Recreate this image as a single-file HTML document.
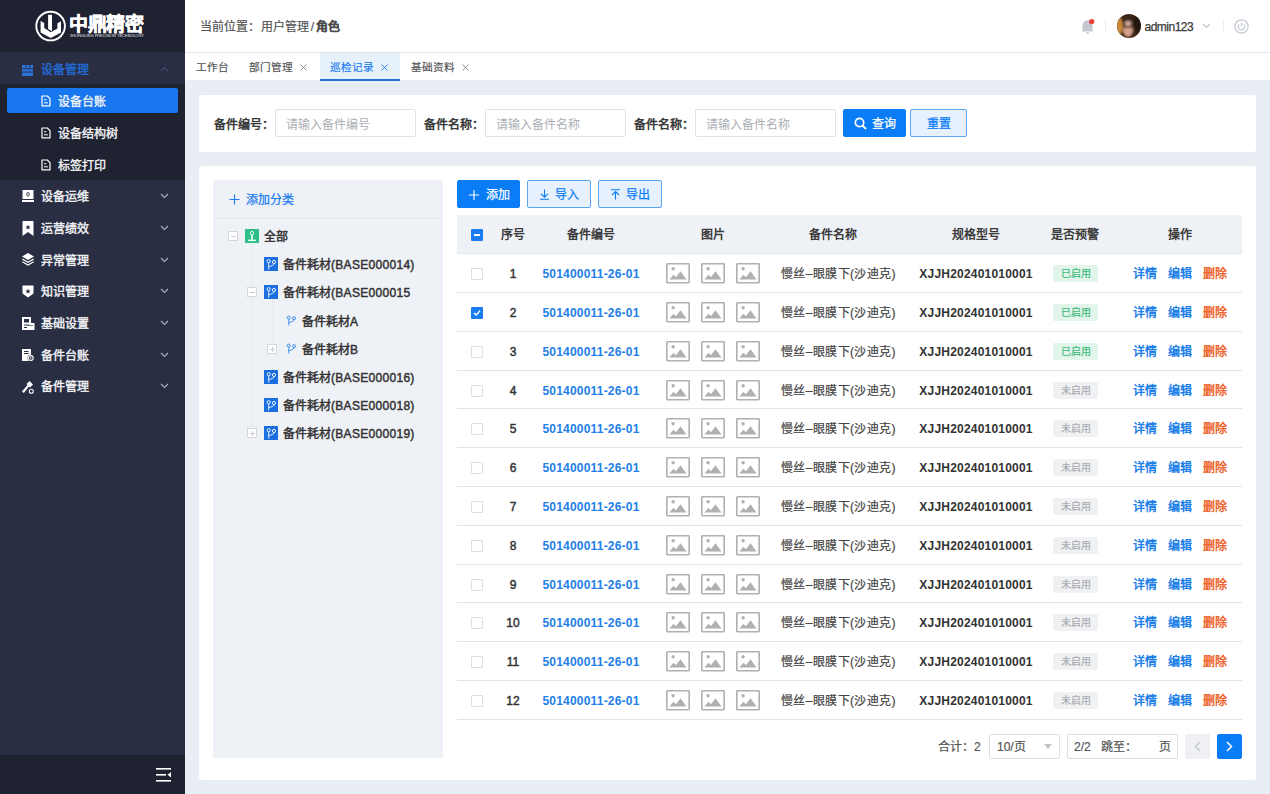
<!DOCTYPE html>
<html lang="zh-CN"><head><meta charset="utf-8">
<style>
*{margin:0;padding:0;box-sizing:border-box}
html,body{width:1270px;height:794px;overflow:hidden;background:#e9edf4;font-family:"Liberation Sans",sans-serif;font-size:12px;color:#333}
.abs{position:absolute}
#side{position:absolute;left:0;top:0;width:185px;height:794px;background:#2a2e42}
#logo{position:absolute;left:0;top:0;width:185px;height:52px;background:#1f2231}
#sub{position:absolute;left:0;top:84px;width:185px;height:96px;background:#1f2231}
#sbot{position:absolute;left:0;top:755px;width:185px;height:39px;background:#1f2231}
.mi{position:absolute;left:0;width:185px;height:20px;margin-top:1px;line-height:20px;color:#f2f3f6;font-size:12px;-webkit-text-stroke:0.4px currentColor}
.mi .t{position:absolute;left:41px;top:0}
.mi .ic{position:absolute;left:22px;top:4px;width:11px;height:11px}
.mi .ch{position:absolute;left:160px;top:6px}
#hdr{position:absolute;left:185px;top:0;width:1085px;height:53px;background:#fff;border-bottom:1px solid #e2e4e8}
#tabs{position:absolute;left:185px;top:53px;width:1085px;height:27px;background:#fff;z-index:2}
.card{position:absolute;background:#fff;border-radius:3px}
.lbl{position:absolute;color:#333;font-size:12px;line-height:16px;margin-top:1.5px;-webkit-text-stroke:0.5px #333}
.inp{position:absolute;height:28px;border:1px solid #e0e2e7;border-radius:2px;background:#fff;color:#acaeb4;font-size:12px;line-height:26px;padding-left:10px;padding-top:2px}
.btn{position:absolute;height:28px;border-radius:2px;font-size:12px;line-height:26px;text-align:center;padding-top:1px;-webkit-text-stroke:0.25px currentColor}
.si{position:absolute;left:0;width:185px;height:20px;line-height:20px;color:#f4f5f8;font-size:12px;-webkit-text-stroke:0.35px #f4f5f8}
.si svg{position:absolute;left:41px;top:4px}
.si span{position:absolute;left:58px;top:0}
.tab{position:absolute;z-index:3;top:6px;font-size:10.6px;line-height:16px;color:#555;white-space:nowrap;-webkit-text-stroke:0.2px currentColor}
.tab .x{display:inline-block;margin-left:7px;width:7px;height:7px;position:relative;top:0px}
.tab .x svg{position:absolute;left:0;top:0}
.cell{position:absolute;width:200px;text-align:center;white-space:nowrap;font-size:12px;padding-top:1px}
.tag{position:absolute;width:45px;height:17px;line-height:17px;font-size:10px;border-radius:2px;text-align:center;-webkit-text-stroke:0.15px currentColor}
.tn{position:absolute;line-height:18px;font-size:12px;color:#333;white-space:nowrap;margin-top:1px;-webkit-text-stroke:0.45px #333}
</style></head><body>
<div id="side">
<div id="logo">
<svg class="abs" style="left:32px;top:8px" width="38" height="36" viewBox="0 0 38 36">
<circle cx="18.6" cy="18.1" r="14.3" fill="none" stroke="#fff" stroke-width="1.9"/>
<path d="M8.6 13 L12.2 15 L12.2 20 L18.8 24.2 L25.4 20.6 L25.4 15.2 L29 13.2 L29 24.5 L18.8 30 L8.6 24.5 Z" fill="#fff"/>
<path d="M16.1 6.8 L20 6.8 L20 23.2 L16.1 21 Z" fill="#fff"/>
</svg>
<div class="abs" style="left:69px;top:13.5px;font-size:19px;line-height:22px;font-weight:bold;color:#fff;-webkit-text-stroke:0.5px #fff;letter-spacing:-0.3px">中鼎精密</div>
<div class="abs" style="left:70px;top:33.5px;font-size:5px;line-height:5px;color:#e8e8ee;white-space:nowrap;transform:scale(0.775,0.85);transform-origin:0 0">ZHONGDING PRECISION TECHNOLOGY</div>
</div>
<div class="mi" style="top:59px;color:#2268cf;-webkit-text-stroke:0.5px #2268cf">
<svg class="abs" style="left:22px;top:5px" width="11" height="11" viewBox="0 0 11 11"><rect x="0" y="0" width="11" height="11" fill="#2a72dc"/><rect x="0" y="3.3" width="11" height="0.9" fill="#2a2e42"/><rect x="0" y="6.6" width="11" height="0.9" fill="#2a2e42"/><rect x="3.5" y="0" width="0.9" height="3.3" fill="#2a2e42"/><rect x="7" y="0" width="0.9" height="3.3" fill="#2a2e42"/></svg>
<span class="t">设备管理</span>
<svg class="ch" width="9" height="6" viewBox="0 0 9 6"><path d="M1 5 L4.5 1.5 L8 5" fill="none" stroke="#3e4f72" stroke-width="1.1"/></svg>
</div>
<div id="sub">
<div class="abs" style="left:7px;top:4px;width:171px;height:25px;background:#1877ee;border-radius:2px"></div>
<div class="si" style="top:7.5px"><svg width="10" height="12" viewBox="0 0 10 12" style="top:3px"><path d="M1 1 H6.3 L9 3.7 V10.8 H1 Z" fill="none" stroke="#fff" stroke-width="1.2" stroke-linejoin="round"/><path d="M3 4.8 H5.3 M3 7.8 H7" stroke="#fff" stroke-width="1"/></svg><span>设备台账</span></div>
<div class="si" style="top:39.5px"><svg width="10" height="12" viewBox="0 0 10 12" style="top:3px"><path d="M1 1 H6.3 L9 3.7 V10.8 H1 Z" fill="none" stroke="#fff" stroke-width="1.2" stroke-linejoin="round"/><path d="M3 4.8 H5.3 M3 7.8 H7" stroke="#fff" stroke-width="1"/></svg><span>设备结构树</span></div>
<div class="si" style="top:71.5px"><svg width="10" height="12" viewBox="0 0 10 12" style="top:3px"><path d="M1 1 H6.3 L9 3.7 V10.8 H1 Z" fill="none" stroke="#fff" stroke-width="1.2" stroke-linejoin="round"/><path d="M3 4.8 H5.3 M3 7.8 H7" stroke="#fff" stroke-width="1"/></svg><span>标签打印</span></div>
</div>
<div class="mi" style="top:186px"><svg class="abs" style="left:22px;top:3px" width="13" height="12" viewBox="0 0 13 12"><rect x="0.5" y="0" width="11" height="9" fill="#fff"/><rect x="0" y="10" width="12" height="2" fill="#fff"/><ellipse cx="6" cy="4.3" rx="1.3" ry="1.8" fill="none" stroke="#2a2e42" stroke-width="0.9"/></svg><span class="t">设备运维</span><svg class="ch" width="9" height="6" viewBox="0 0 9 6"><path d="M1 1 L4.5 4.5 L8 1" fill="none" stroke="#aab0bd" stroke-width="1.1"/></svg></div>
<div class="mi" style="top:218px"><svg class="abs" style="left:22px;top:2px" width="13" height="15" viewBox="0 0 13 15"><path d="M0.5 0 H11.5 V15 L6 11 L0.5 15 Z" fill="#fff"/><path d="M6 3.8 L6.8 5.5 L8.5 5.6 L7.2 6.8 L7.6 8.5 L6 7.6 L4.4 8.5 L4.8 6.8 L3.5 5.6 L5.2 5.5 Z" fill="#2a2e42"/></svg><span class="t">运营绩效</span><svg class="ch" width="9" height="6" viewBox="0 0 9 6"><path d="M1 1 L4.5 4.5 L8 1" fill="none" stroke="#aab0bd" stroke-width="1.1"/></svg></div>
<div class="mi" style="top:250px"><svg class="abs" style="left:22px;top:2px" width="13" height="13" viewBox="0 0 13 13"><path d="M6 0 L12 3.5 L6 7 L0 3.5 Z" fill="#fff"/><path d="M0.3 6 L6 9.3 L11.7 6" fill="none" stroke="#fff" stroke-width="1.3"/><path d="M0.3 8.7 L6 12 L11.7 8.7" fill="none" stroke="#fff" stroke-width="1.3"/></svg><span class="t">异常管理</span><svg class="ch" width="9" height="6" viewBox="0 0 9 6"><path d="M1 1 L4.5 4.5 L8 1" fill="none" stroke="#aab0bd" stroke-width="1.1"/></svg></div>
<div class="mi" style="top:281px"><svg class="abs" style="left:22px;top:3px" width="13" height="13" viewBox="0 0 13 13"><path d="M0.5 0.5 H11.5 V8.5 L6 12.5 L0.5 8.5 Z" fill="#fff"/><path d="M6 3.8 L6.8 5.5 L8.5 5.6 L7.2 6.8 L7.6 8.5 L6 7.6 L4.4 8.5 L4.8 6.8 L3.5 5.6 L5.2 5.5 Z" fill="#2a2e42"/></svg><span class="t">知识管理</span><svg class="ch" width="9" height="6" viewBox="0 0 9 6"><path d="M1 1 L4.5 4.5 L8 1" fill="none" stroke="#aab0bd" stroke-width="1.1"/></svg></div>
<div class="mi" style="top:313px"><svg class="abs" style="left:22px;top:2.5px" width="13" height="13" viewBox="0 0 13 13"><rect x="0" y="0" width="9" height="13" fill="#fff"/><rect x="9" y="6" width="3.5" height="7" fill="#fff"/><rect x="2" y="2" width="5" height="3.5" fill="#2a2e42"/><rect x="2" y="7.5" width="5" height="1" fill="#2a2e42"/><rect x="2" y="10" width="3" height="1" fill="#2a2e42"/><rect x="6" y="8" width="5" height="1" fill="#2a2e42" opacity=".6"/></svg><span class="t">基础设置</span><svg class="ch" width="9" height="6" viewBox="0 0 9 6"><path d="M1 1 L4.5 4.5 L8 1" fill="none" stroke="#aab0bd" stroke-width="1.1"/></svg></div>
<div class="mi" style="top:345px"><svg class="abs" style="left:22px;top:2.5px" width="13" height="12" viewBox="0 0 13 12"><rect x="0" y="0" width="9" height="12" fill="#fff"/><rect x="2" y="2" width="4.5" height="1" fill="#2a2e42"/><rect x="2" y="4" width="4.5" height="1" fill="#2a2e42"/><circle cx="8.8" cy="9" r="3.3" fill="#2a2e42"/><circle cx="8.8" cy="9" r="2.4" fill="none" stroke="#fff" stroke-width="1.1"/><circle cx="8.8" cy="9" r="0.8" fill="#fff"/></svg><span class="t">备件台账</span><svg class="ch" width="9" height="6" viewBox="0 0 9 6"><path d="M1 1 L4.5 4.5 L8 1" fill="none" stroke="#aab0bd" stroke-width="1.1"/></svg></div>
<div class="mi" style="top:376px"><svg class="abs" style="left:22px;top:3.5px" width="13" height="13" viewBox="0 0 13 13"><path d="M0 10.5 L5.5 4 L4.5 3 L7.5 0 L11 3.5 L8 6.5 L7 5.5 L1.8 12 Z" fill="#fff"/><circle cx="9.3" cy="10.3" r="2.7" fill="#2a2e42"/><circle cx="9.3" cy="10.3" r="2" fill="none" stroke="#fff" stroke-width="1.1"/></svg><span class="t">备件管理</span><svg class="ch" width="9" height="6" viewBox="0 0 9 6"><path d="M1 1 L4.5 4.5 L8 1" fill="none" stroke="#aab0bd" stroke-width="1.1"/></svg></div>
<div id="sbot">
<svg class="abs" style="left:156px;top:13px" width="16" height="14" viewBox="0 0 16 14"><rect x="0" y="0" width="15" height="1.6" fill="#fff"/><rect x="0" y="6" width="10" height="1.6" fill="#fff"/><rect x="0" y="12" width="15" height="1.6" fill="#fff"/><path d="M15 4 L11.5 6.8 L15 9.6 Z" fill="#fff"/></svg>
</div>
</div>
<div id="hdr">
<div class="abs" style="left:15px;top:19px;font-size:12px;line-height:17px;color:#555;white-space:nowrap;-webkit-text-stroke:0.2px #555">当前位置：<span style="margin-left:1px">用户管理</span><span style="margin:0 1.8px">/</span><b style="color:#222">角色</b></div>
<svg class="abs" style="left:895px;top:18px" width="16" height="16" viewBox="0 0 16 16"><path d="M2.5 12.5 L2.5 8 C2.5 4.5 4.8 2.3 7.5 2.3 C10.2 2.3 12.5 4.5 12.5 8 L12.5 12.5 L13.5 13.5 L1.5 13.5 Z" fill="#c2c7d0"/><rect x="6" y="14.3" width="3" height="1.5" rx=".7" fill="#c2c7d0"/><circle cx="11.7" cy="3.6" r="2.7" fill="#e8453c"/></svg>
<div class="abs" style="left:920px;top:19px;width:1px;height:13px;background:#eceef2"></div>
<svg class="abs" style="left:932px;top:14px" width="24" height="24" viewBox="0 0 24 24"><defs><clipPath id="av"><circle cx="12" cy="12" r="12"/></clipPath><filter id="bl"><feGaussianBlur stdDeviation="0.8"/></filter></defs><g clip-path="url(#av)"><rect width="24" height="24" fill="#3b2519"/><g filter="url(#bl)"><ellipse cx="2" cy="12" rx="4" ry="9" fill="#c8883a"/><ellipse cx="11" cy="16.5" rx="5" ry="6.5" fill="#d6a08a"/><ellipse cx="11" cy="9" rx="3.5" ry="2.5" fill="#c9a59a"/><rect x="7" y="12" width="8" height="2" fill="#4a3028"/><ellipse cx="20" cy="10" rx="4" ry="8" fill="#24150f"/></g></g></svg>
<div class="abs" style="left:959.5px;top:19px;font-size:12px;line-height:17px;color:#3a3a3a;letter-spacing:-0.5px;-webkit-text-stroke:0.25px #3a3a3a">admin123</div>
<svg class="abs" style="left:1017px;top:23px" width="9" height="6" viewBox="0 0 9 6"><path d="M1 1 L4.5 4.5 L8 1" fill="none" stroke="#c0c4cc" stroke-width="1.1"/></svg>
<div class="abs" style="left:1038px;top:19px;width:1px;height:13px;background:#eceef2"></div>
<svg class="abs" style="left:1049px;top:19px" width="15" height="15" viewBox="0 0 15 15"><circle cx="7.5" cy="7.5" r="6.6" fill="none" stroke="#c5cad3" stroke-width="1.3"/><path d="M5.2 5.3 A3.3 3.3 0 1 0 9.8 5.3" fill="none" stroke="#c5cad3" stroke-width="1.2"/><path d="M7.5 3.5 V7.5" stroke="#c5cad3" stroke-width="1.2"/></svg>
</div>
<div id="tabs">
<div class="tab" style="left:11px">工作台</div>
<div class="tab" style="left:64px">部门管理<span class="x"><svg width="7" height="7" viewBox="0 0 7 7"><path d="M0.5 0.5 L6.5 6.5 M6.5 0.5 L0.5 6.5" stroke="#888" stroke-width="0.9"/></svg></span></div>
<div class="abs" style="left:135px;top:0;width:80px;height:28px;background:#e6f1fc;border-bottom:2px solid #2474d8;z-index:2"></div>
<div class="tab" style="left:145px;color:#1a7cf0">巡检记录<span class="x"><svg width="7" height="7" viewBox="0 0 7 7"><path d="M0.5 0.5 L6.5 6.5 M6.5 0.5 L0.5 6.5" stroke="#1a7cf0" stroke-width="0.9"/></svg></span></div>
<div class="tab" style="left:226px">基础资料<span class="x"><svg width="7" height="7" viewBox="0 0 7 7"><path d="M0.5 0.5 L6.5 6.5 M6.5 0.5 L0.5 6.5" stroke="#888" stroke-width="0.9"/></svg></span></div>
</div>
<div class="card" style="left:199px;top:95px;width:1057px;height:57px">
<div class="lbl" style="left:15px;top:20px">备件编号：</div>
<div class="inp" style="left:76px;top:14px;width:141px">请输入备件编号</div>
<div class="lbl" style="left:225px;top:20px">备件名称：</div>
<div class="inp" style="left:286px;top:14px;width:141px">请输入备件名称</div>
<div class="lbl" style="left:435px;top:20px">备件名称：</div>
<div class="inp" style="left:496px;top:14px;width:141px">请输入备件名称</div>
<div class="btn" style="left:644px;top:14px;width:63px;background:#0a7cf5;color:#fff;border:1px solid #0a7cf5"><svg style="vertical-align:-2px;margin-right:5px" width="13" height="13" viewBox="0 0 13 13"><circle cx="5.5" cy="5.5" r="4.2" fill="none" stroke="#fff" stroke-width="1.7"/><path d="M8.5 8.5 L12 12" stroke="#fff" stroke-width="1.9"/></svg>查询</div>
<div class="btn" style="left:711px;top:14px;width:57px;background:#e6f1fd;color:#0a7cf5;border:1px solid #5aa6f5">重置</div>
</div>
<div class="card" style="left:199px;top:166px;width:1057px;height:614px"></div>
<div class="abs" style="left:213px;top:180px;width:230px;height:578px;background:#eef1f6;border-radius:2px">
<div class="abs" style="left:0;top:38px;width:230px;height:1px;background:#e3e6ec"></div>
<div class="abs" style="left:16px;top:12px;font-size:12px;line-height:17px;color:#1a7cf0;white-space:nowrap;-webkit-text-stroke:0.25px #1a7cf0"><svg style="vertical-align:-1px;margin-right:6px" width="11" height="11" viewBox="0 0 11 11"><path d="M5.5 0.5 V10.5 M0.5 5.5 H10.5" stroke="#1a7cf0" stroke-width="1.1"/></svg>添加分类</div>
<div class="abs" style="left:39px;top:63px;width:1px;height:191px;background:#e8eaef"></div>
<div class="abs" style="left:59px;top:119px;width:1px;height:50px;background:#e8eaef"></div>
<div class="abs" style="left:15px;top:51px;width:10px;height:10px;border:1px solid #d3d6dc;background:#fff"><div class="abs" style="left:1.5px;top:4px;width:5px;height:1px;background:#c9ccd2"></div></div><div class="abs" style="left:32px;top:49px;width:14px;height:14px"><svg width="14" height="14" viewBox="0 0 14 14"><rect width="14" height="14" fill="#2dbf86"/><circle cx="6.9" cy="4.1" r="1.7" fill="none" stroke="#e6fff4" stroke-width="1"/><rect x="6" y="5.6" width="1.8" height="5.2" fill="#e6fff4"/><rect x="3" y="10.6" width="7.8" height="1.5" fill="#e6fff4"/></svg></div><div class="tn" style="left:51px;top:47px">全部</div>
<div class="abs" style="left:51px;top:77px;width:14px;height:14px"><svg width="14" height="14" viewBox="0 0 14 14"><rect width="14" height="14" fill="#1b6fe0"/><circle cx="4.7" cy="4.2" r="1.6" fill="none" stroke="#e8f3ff" stroke-width="1"/><circle cx="10" cy="5" r="1.6" fill="none" stroke="#e8f3ff" stroke-width="1"/><path d="M4.7 5.8 V12.5 M10 6.6 C10 8.6 7 9 4.7 9.6" fill="none" stroke="#e8f3ff" stroke-width="1"/></svg></div><div class="tn" style="left:70px;top:75px">备件耗材<span style="letter-spacing:0.3px">(BASE000014)</span></div>
<div class="abs" style="left:34px;top:107px;width:10px;height:10px;border:1px solid #d3d6dc;background:#fff"><div class="abs" style="left:1.5px;top:4px;width:5px;height:1px;background:#c9ccd2"></div></div><div class="abs" style="left:51px;top:105px;width:14px;height:14px"><svg width="14" height="14" viewBox="0 0 14 14"><rect width="14" height="14" fill="#1b6fe0"/><circle cx="4.7" cy="4.2" r="1.6" fill="none" stroke="#e8f3ff" stroke-width="1"/><circle cx="10" cy="5" r="1.6" fill="none" stroke="#e8f3ff" stroke-width="1"/><path d="M4.7 5.8 V12.5 M10 6.6 C10 8.6 7 9 4.7 9.6" fill="none" stroke="#e8f3ff" stroke-width="1"/></svg></div><div class="tn" style="left:70px;top:103px">备件耗材<span style="letter-spacing:0.3px">(BASE000015</span></div>
<div class="abs" style="left:73px;top:135px;width:11px;height:11px"><svg width="11" height="11" viewBox="0 0 11 11"><circle cx="2.8" cy="2.6" r="1.5" fill="none" stroke="#3d8ef0" stroke-width="1"/><circle cx="8" cy="3.2" r="1.5" fill="none" stroke="#3d8ef0" stroke-width="1"/><path d="M2.8 4.1 V10.5 M8 4.7 C8 6.6 5 7 2.8 7.6" fill="none" stroke="#3d8ef0" stroke-width="1"/></svg></div><div class="tn" style="left:89px;top:132px">备件耗材A</div>
<div class="abs" style="left:54px;top:164px;width:10px;height:10px;border:1px solid #d3d6dc;background:#fff"><div class="abs" style="left:1.5px;top:4px;width:5px;height:1px;background:#c9ccd2"></div><div class="abs" style="left:4px;top:2px;width:1px;height:5px;background:#c9ccd2"></div></div><div class="abs" style="left:73px;top:163px;width:11px;height:11px"><svg width="11" height="11" viewBox="0 0 11 11"><circle cx="2.8" cy="2.6" r="1.5" fill="none" stroke="#3d8ef0" stroke-width="1"/><circle cx="8" cy="3.2" r="1.5" fill="none" stroke="#3d8ef0" stroke-width="1"/><path d="M2.8 4.1 V10.5 M8 4.7 C8 6.6 5 7 2.8 7.6" fill="none" stroke="#3d8ef0" stroke-width="1"/></svg></div><div class="tn" style="left:89px;top:160px">备件耗材B</div>
<div class="abs" style="left:51px;top:190px;width:14px;height:14px"><svg width="14" height="14" viewBox="0 0 14 14"><rect width="14" height="14" fill="#1b6fe0"/><circle cx="4.7" cy="4.2" r="1.6" fill="none" stroke="#e8f3ff" stroke-width="1"/><circle cx="10" cy="5" r="1.6" fill="none" stroke="#e8f3ff" stroke-width="1"/><path d="M4.7 5.8 V12.5 M10 6.6 C10 8.6 7 9 4.7 9.6" fill="none" stroke="#e8f3ff" stroke-width="1"/></svg></div><div class="tn" style="left:70px;top:188px">备件耗材<span style="letter-spacing:0.3px">(BASE000016)</span></div>
<div class="abs" style="left:51px;top:218px;width:14px;height:14px"><svg width="14" height="14" viewBox="0 0 14 14"><rect width="14" height="14" fill="#1b6fe0"/><circle cx="4.7" cy="4.2" r="1.6" fill="none" stroke="#e8f3ff" stroke-width="1"/><circle cx="10" cy="5" r="1.6" fill="none" stroke="#e8f3ff" stroke-width="1"/><path d="M4.7 5.8 V12.5 M10 6.6 C10 8.6 7 9 4.7 9.6" fill="none" stroke="#e8f3ff" stroke-width="1"/></svg></div><div class="tn" style="left:70px;top:216px">备件耗材<span style="letter-spacing:0.3px">(BASE000018)</span></div>
<div class="abs" style="left:34px;top:248px;width:10px;height:10px;border:1px solid #d3d6dc;background:#fff"><div class="abs" style="left:1.5px;top:4px;width:5px;height:1px;background:#c9ccd2"></div><div class="abs" style="left:4px;top:2px;width:1px;height:5px;background:#c9ccd2"></div></div><div class="abs" style="left:51px;top:246px;width:14px;height:14px"><svg width="14" height="14" viewBox="0 0 14 14"><rect width="14" height="14" fill="#1b6fe0"/><circle cx="4.7" cy="4.2" r="1.6" fill="none" stroke="#e8f3ff" stroke-width="1"/><circle cx="10" cy="5" r="1.6" fill="none" stroke="#e8f3ff" stroke-width="1"/><path d="M4.7 5.8 V12.5 M10 6.6 C10 8.6 7 9 4.7 9.6" fill="none" stroke="#e8f3ff" stroke-width="1"/></svg></div><div class="tn" style="left:70px;top:244px">备件耗材<span style="letter-spacing:0.3px">(BASE000019)</span></div>
</div>
<div class="btn" style="left:457px;top:180px;width:63px;background:#0a7cf5;color:#fff;border:1px solid #0a7cf5"><svg style="vertical-align:-1px;margin-right:7px;margin-left:2px" width="10" height="10" viewBox="0 0 10 10"><path d="M5 0 V10 M0 5 H10" stroke="#fff" stroke-width="1.1"/></svg>添加</div>
<div class="btn" style="left:527px;top:180px;width:64px;background:#e6f1fd;color:#0a7cf5;border:1px solid #5aa6f5"><svg style="vertical-align:-1px;margin-right:5px" width="11" height="11" viewBox="0 0 11 11"><path d="M5.5 0.5 V8 M2 4.8 L5.5 8.2 L9 4.8 M1 10.3 H10" fill="none" stroke="#0a7cf5" stroke-width="1.1"/></svg>导入</div>
<div class="btn" style="left:598px;top:180px;width:64px;background:#e6f1fd;color:#0a7cf5;border:1px solid #5aa6f5"><svg style="vertical-align:-1px;margin-right:5px" width="11" height="11" viewBox="0 0 11 11"><path d="M1 0.7 H10 M5.5 2.5 V10.5 M2 6 L5.5 2.6 L9 6" fill="none" stroke="#0a7cf5" stroke-width="1.1"/></svg>导出</div>
<div class="abs" style="left:457px;top:215px;width:785px;height:39px;background:#eef1f6;border-bottom:1px solid #e4e7ed"></div>
<div class="abs" style="left:471px;top:229px;width:12px;height:12px;background:#1a7cf0;border-radius:1px"><div class="abs" style="left:3px;top:5px;width:6px;height:2px;background:#fff"></div></div>
<div class="cell" style="left:413px;top:215px;height:38px;line-height:38px;font-weight:bold;color:#3c3c3c">序号</div>
<div class="cell" style="left:491px;top:215px;height:38px;line-height:38px;font-weight:bold;color:#3c3c3c">备件编号</div>
<div class="cell" style="left:613px;top:215px;height:38px;line-height:38px;font-weight:bold;color:#3c3c3c">图片</div>
<div class="cell" style="left:733px;top:215px;height:38px;line-height:38px;font-weight:bold;color:#3c3c3c">备件名称</div>
<div class="cell" style="left:876px;top:215px;height:38px;line-height:38px;font-weight:bold;color:#3c3c3c">规格型号</div>
<div class="cell" style="left:975px;top:215px;height:38px;line-height:38px;font-weight:bold;color:#3c3c3c">是否预警</div>
<div class="cell" style="left:1080px;top:215px;height:38px;line-height:38px;font-weight:bold;color:#3c3c3c">操作</div>
<div class="abs" style="left:457px;top:292px;width:785px;height:1px;background:#e3e4e7"></div>
<div class="abs" style="left:471px;top:268px;width:12px;height:12px;background:#fff;border:1px solid #dcdfe6;border-radius:1px"></div>
<div class="cell" style="left:413px;top:254px;height:39px;line-height:39px;color:#333;-webkit-text-stroke:0.45px #333">1</div>
<div class="cell" style="left:491px;top:254px;height:39px;line-height:39px;font-weight:bold;color:#1e80e8;letter-spacing:0.2px">501400011-26-01</div>
<svg class="abs" style="left:666px;top:263px" width="24" height="20.5" viewBox="0 0 24 20.5"><rect x="0.8" y="0.8" width="22.4" height="18.9" rx="0.6" fill="#fff" stroke="#b0b0b0" stroke-width="1.6"/><circle cx="7.1" cy="5.8" r="1.7" fill="#b0b0b0"/><path d="M3.4 16.6 L7.5 11.8 L9.9 14.2 L14.5 8.3 L20.5 16.6 Z" fill="#b0b0b0"/></svg><svg class="abs" style="left:701px;top:263px" width="24" height="20.5" viewBox="0 0 24 20.5"><rect x="0.8" y="0.8" width="22.4" height="18.9" rx="0.6" fill="#fff" stroke="#b0b0b0" stroke-width="1.6"/><circle cx="7.1" cy="5.8" r="1.7" fill="#b0b0b0"/><path d="M3.4 16.6 L7.5 11.8 L9.9 14.2 L14.5 8.3 L20.5 16.6 Z" fill="#b0b0b0"/></svg><svg class="abs" style="left:736px;top:263px" width="24" height="20.5" viewBox="0 0 24 20.5"><rect x="0.8" y="0.8" width="22.4" height="18.9" rx="0.6" fill="#fff" stroke="#b0b0b0" stroke-width="1.6"/><circle cx="7.1" cy="5.8" r="1.7" fill="#b0b0b0"/><path d="M3.4 16.6 L7.5 11.8 L9.9 14.2 L14.5 8.3 L20.5 16.6 Z" fill="#b0b0b0"/></svg><div class="cell" style="left:738.5px;top:254px;height:39px;line-height:39px;color:#444;-webkit-text-stroke:0.2px #444;letter-spacing:0.4px">慢丝–眼膜下(沙迪克)</div>
<div class="cell" style="left:876px;top:254px;height:39px;line-height:39px;font-weight:bold;color:#333;letter-spacing:0.2px">XJJH202401010001</div>
<div class="tag" style="left:1053px;top:265px;background:#e1f5ea;color:#3bb878">已启用</div>
<div class="abs" style="left:1133px;top:254px;height:39px;line-height:39px;white-space:nowrap;font-weight:bold;padding-top:1px"><span style="color:#1e80e8">详情</span><span style="color:#1e80e8;margin-left:11px">编辑</span><span style="color:#f0662e;margin-left:11px">删除</span></div>
<div class="abs" style="left:457px;top:331px;width:785px;height:1px;background:#e3e4e7"></div>
<div class="abs" style="left:471px;top:307px;width:12px;height:12px;background:#1a7cf0;border-radius:1px"><svg class="abs" style="left:2px;top:2px" width="8" height="8" viewBox="0 0 8 8"><path d="M1 4 L3.2 6 L7 1.8" fill="none" stroke="#fff" stroke-width="1.3"/></svg></div>
<div class="cell" style="left:413px;top:293px;height:39px;line-height:39px;color:#333;-webkit-text-stroke:0.45px #333">2</div>
<div class="cell" style="left:491px;top:293px;height:39px;line-height:39px;font-weight:bold;color:#1e80e8;letter-spacing:0.2px">501400011-26-01</div>
<svg class="abs" style="left:666px;top:302px" width="24" height="20.5" viewBox="0 0 24 20.5"><rect x="0.8" y="0.8" width="22.4" height="18.9" rx="0.6" fill="#fff" stroke="#b0b0b0" stroke-width="1.6"/><circle cx="7.1" cy="5.8" r="1.7" fill="#b0b0b0"/><path d="M3.4 16.6 L7.5 11.8 L9.9 14.2 L14.5 8.3 L20.5 16.6 Z" fill="#b0b0b0"/></svg><svg class="abs" style="left:701px;top:302px" width="24" height="20.5" viewBox="0 0 24 20.5"><rect x="0.8" y="0.8" width="22.4" height="18.9" rx="0.6" fill="#fff" stroke="#b0b0b0" stroke-width="1.6"/><circle cx="7.1" cy="5.8" r="1.7" fill="#b0b0b0"/><path d="M3.4 16.6 L7.5 11.8 L9.9 14.2 L14.5 8.3 L20.5 16.6 Z" fill="#b0b0b0"/></svg><svg class="abs" style="left:736px;top:302px" width="24" height="20.5" viewBox="0 0 24 20.5"><rect x="0.8" y="0.8" width="22.4" height="18.9" rx="0.6" fill="#fff" stroke="#b0b0b0" stroke-width="1.6"/><circle cx="7.1" cy="5.8" r="1.7" fill="#b0b0b0"/><path d="M3.4 16.6 L7.5 11.8 L9.9 14.2 L14.5 8.3 L20.5 16.6 Z" fill="#b0b0b0"/></svg><div class="cell" style="left:738.5px;top:293px;height:39px;line-height:39px;color:#444;-webkit-text-stroke:0.2px #444;letter-spacing:0.4px">慢丝–眼膜下(沙迪克)</div>
<div class="cell" style="left:876px;top:293px;height:39px;line-height:39px;font-weight:bold;color:#333;letter-spacing:0.2px">XJJH202401010001</div>
<div class="tag" style="left:1053px;top:304px;background:#e1f5ea;color:#3bb878">已启用</div>
<div class="abs" style="left:1133px;top:293px;height:39px;line-height:39px;white-space:nowrap;font-weight:bold;padding-top:1px"><span style="color:#1e80e8">详情</span><span style="color:#1e80e8;margin-left:11px">编辑</span><span style="color:#f0662e;margin-left:11px">删除</span></div>
<div class="abs" style="left:457px;top:370px;width:785px;height:1px;background:#e3e4e7"></div>
<div class="abs" style="left:471px;top:346px;width:12px;height:12px;background:#fff;border:1px solid #dcdfe6;border-radius:1px"></div>
<div class="cell" style="left:413px;top:332px;height:39px;line-height:39px;color:#333;-webkit-text-stroke:0.45px #333">3</div>
<div class="cell" style="left:491px;top:332px;height:39px;line-height:39px;font-weight:bold;color:#1e80e8;letter-spacing:0.2px">501400011-26-01</div>
<svg class="abs" style="left:666px;top:341px" width="24" height="20.5" viewBox="0 0 24 20.5"><rect x="0.8" y="0.8" width="22.4" height="18.9" rx="0.6" fill="#fff" stroke="#b0b0b0" stroke-width="1.6"/><circle cx="7.1" cy="5.8" r="1.7" fill="#b0b0b0"/><path d="M3.4 16.6 L7.5 11.8 L9.9 14.2 L14.5 8.3 L20.5 16.6 Z" fill="#b0b0b0"/></svg><svg class="abs" style="left:701px;top:341px" width="24" height="20.5" viewBox="0 0 24 20.5"><rect x="0.8" y="0.8" width="22.4" height="18.9" rx="0.6" fill="#fff" stroke="#b0b0b0" stroke-width="1.6"/><circle cx="7.1" cy="5.8" r="1.7" fill="#b0b0b0"/><path d="M3.4 16.6 L7.5 11.8 L9.9 14.2 L14.5 8.3 L20.5 16.6 Z" fill="#b0b0b0"/></svg><svg class="abs" style="left:736px;top:341px" width="24" height="20.5" viewBox="0 0 24 20.5"><rect x="0.8" y="0.8" width="22.4" height="18.9" rx="0.6" fill="#fff" stroke="#b0b0b0" stroke-width="1.6"/><circle cx="7.1" cy="5.8" r="1.7" fill="#b0b0b0"/><path d="M3.4 16.6 L7.5 11.8 L9.9 14.2 L14.5 8.3 L20.5 16.6 Z" fill="#b0b0b0"/></svg><div class="cell" style="left:738.5px;top:332px;height:39px;line-height:39px;color:#444;-webkit-text-stroke:0.2px #444;letter-spacing:0.4px">慢丝–眼膜下(沙迪克)</div>
<div class="cell" style="left:876px;top:332px;height:39px;line-height:39px;font-weight:bold;color:#333;letter-spacing:0.2px">XJJH202401010001</div>
<div class="tag" style="left:1053px;top:343px;background:#e1f5ea;color:#3bb878">已启用</div>
<div class="abs" style="left:1133px;top:332px;height:39px;line-height:39px;white-space:nowrap;font-weight:bold;padding-top:1px"><span style="color:#1e80e8">详情</span><span style="color:#1e80e8;margin-left:11px">编辑</span><span style="color:#f0662e;margin-left:11px">删除</span></div>
<div class="abs" style="left:457px;top:408px;width:785px;height:1px;background:#e3e4e7"></div>
<div class="abs" style="left:471px;top:385px;width:12px;height:12px;background:#fff;border:1px solid #dcdfe6;border-radius:1px"></div>
<div class="cell" style="left:413px;top:371px;height:39px;line-height:39px;color:#333;-webkit-text-stroke:0.45px #333">4</div>
<div class="cell" style="left:491px;top:371px;height:39px;line-height:39px;font-weight:bold;color:#1e80e8;letter-spacing:0.2px">501400011-26-01</div>
<svg class="abs" style="left:666px;top:380px" width="24" height="20.5" viewBox="0 0 24 20.5"><rect x="0.8" y="0.8" width="22.4" height="18.9" rx="0.6" fill="#fff" stroke="#b0b0b0" stroke-width="1.6"/><circle cx="7.1" cy="5.8" r="1.7" fill="#b0b0b0"/><path d="M3.4 16.6 L7.5 11.8 L9.9 14.2 L14.5 8.3 L20.5 16.6 Z" fill="#b0b0b0"/></svg><svg class="abs" style="left:701px;top:380px" width="24" height="20.5" viewBox="0 0 24 20.5"><rect x="0.8" y="0.8" width="22.4" height="18.9" rx="0.6" fill="#fff" stroke="#b0b0b0" stroke-width="1.6"/><circle cx="7.1" cy="5.8" r="1.7" fill="#b0b0b0"/><path d="M3.4 16.6 L7.5 11.8 L9.9 14.2 L14.5 8.3 L20.5 16.6 Z" fill="#b0b0b0"/></svg><svg class="abs" style="left:736px;top:380px" width="24" height="20.5" viewBox="0 0 24 20.5"><rect x="0.8" y="0.8" width="22.4" height="18.9" rx="0.6" fill="#fff" stroke="#b0b0b0" stroke-width="1.6"/><circle cx="7.1" cy="5.8" r="1.7" fill="#b0b0b0"/><path d="M3.4 16.6 L7.5 11.8 L9.9 14.2 L14.5 8.3 L20.5 16.6 Z" fill="#b0b0b0"/></svg><div class="cell" style="left:738.5px;top:371px;height:39px;line-height:39px;color:#444;-webkit-text-stroke:0.2px #444;letter-spacing:0.4px">慢丝–眼膜下(沙迪克)</div>
<div class="cell" style="left:876px;top:371px;height:39px;line-height:39px;font-weight:bold;color:#333;letter-spacing:0.2px">XJJH202401010001</div>
<div class="tag" style="left:1053px;top:382px;background:#f0f1f3;color:#a8abb2">未启用</div>
<div class="abs" style="left:1133px;top:371px;height:39px;line-height:39px;white-space:nowrap;font-weight:bold;padding-top:1px"><span style="color:#1e80e8">详情</span><span style="color:#1e80e8;margin-left:11px">编辑</span><span style="color:#f0662e;margin-left:11px">删除</span></div>
<div class="abs" style="left:457px;top:447px;width:785px;height:1px;background:#e3e4e7"></div>
<div class="abs" style="left:471px;top:423px;width:12px;height:12px;background:#fff;border:1px solid #dcdfe6;border-radius:1px"></div>
<div class="cell" style="left:413px;top:409px;height:39px;line-height:39px;color:#333;-webkit-text-stroke:0.45px #333">5</div>
<div class="cell" style="left:491px;top:409px;height:39px;line-height:39px;font-weight:bold;color:#1e80e8;letter-spacing:0.2px">501400011-26-01</div>
<svg class="abs" style="left:666px;top:418px" width="24" height="20.5" viewBox="0 0 24 20.5"><rect x="0.8" y="0.8" width="22.4" height="18.9" rx="0.6" fill="#fff" stroke="#b0b0b0" stroke-width="1.6"/><circle cx="7.1" cy="5.8" r="1.7" fill="#b0b0b0"/><path d="M3.4 16.6 L7.5 11.8 L9.9 14.2 L14.5 8.3 L20.5 16.6 Z" fill="#b0b0b0"/></svg><svg class="abs" style="left:701px;top:418px" width="24" height="20.5" viewBox="0 0 24 20.5"><rect x="0.8" y="0.8" width="22.4" height="18.9" rx="0.6" fill="#fff" stroke="#b0b0b0" stroke-width="1.6"/><circle cx="7.1" cy="5.8" r="1.7" fill="#b0b0b0"/><path d="M3.4 16.6 L7.5 11.8 L9.9 14.2 L14.5 8.3 L20.5 16.6 Z" fill="#b0b0b0"/></svg><svg class="abs" style="left:736px;top:418px" width="24" height="20.5" viewBox="0 0 24 20.5"><rect x="0.8" y="0.8" width="22.4" height="18.9" rx="0.6" fill="#fff" stroke="#b0b0b0" stroke-width="1.6"/><circle cx="7.1" cy="5.8" r="1.7" fill="#b0b0b0"/><path d="M3.4 16.6 L7.5 11.8 L9.9 14.2 L14.5 8.3 L20.5 16.6 Z" fill="#b0b0b0"/></svg><div class="cell" style="left:738.5px;top:409px;height:39px;line-height:39px;color:#444;-webkit-text-stroke:0.2px #444;letter-spacing:0.4px">慢丝–眼膜下(沙迪克)</div>
<div class="cell" style="left:876px;top:409px;height:39px;line-height:39px;font-weight:bold;color:#333;letter-spacing:0.2px">XJJH202401010001</div>
<div class="tag" style="left:1053px;top:420px;background:#f0f1f3;color:#a8abb2">未启用</div>
<div class="abs" style="left:1133px;top:409px;height:39px;line-height:39px;white-space:nowrap;font-weight:bold;padding-top:1px"><span style="color:#1e80e8">详情</span><span style="color:#1e80e8;margin-left:11px">编辑</span><span style="color:#f0662e;margin-left:11px">删除</span></div>
<div class="abs" style="left:457px;top:486px;width:785px;height:1px;background:#e3e4e7"></div>
<div class="abs" style="left:471px;top:462px;width:12px;height:12px;background:#fff;border:1px solid #dcdfe6;border-radius:1px"></div>
<div class="cell" style="left:413px;top:448px;height:39px;line-height:39px;color:#333;-webkit-text-stroke:0.45px #333">6</div>
<div class="cell" style="left:491px;top:448px;height:39px;line-height:39px;font-weight:bold;color:#1e80e8;letter-spacing:0.2px">501400011-26-01</div>
<svg class="abs" style="left:666px;top:457px" width="24" height="20.5" viewBox="0 0 24 20.5"><rect x="0.8" y="0.8" width="22.4" height="18.9" rx="0.6" fill="#fff" stroke="#b0b0b0" stroke-width="1.6"/><circle cx="7.1" cy="5.8" r="1.7" fill="#b0b0b0"/><path d="M3.4 16.6 L7.5 11.8 L9.9 14.2 L14.5 8.3 L20.5 16.6 Z" fill="#b0b0b0"/></svg><svg class="abs" style="left:701px;top:457px" width="24" height="20.5" viewBox="0 0 24 20.5"><rect x="0.8" y="0.8" width="22.4" height="18.9" rx="0.6" fill="#fff" stroke="#b0b0b0" stroke-width="1.6"/><circle cx="7.1" cy="5.8" r="1.7" fill="#b0b0b0"/><path d="M3.4 16.6 L7.5 11.8 L9.9 14.2 L14.5 8.3 L20.5 16.6 Z" fill="#b0b0b0"/></svg><svg class="abs" style="left:736px;top:457px" width="24" height="20.5" viewBox="0 0 24 20.5"><rect x="0.8" y="0.8" width="22.4" height="18.9" rx="0.6" fill="#fff" stroke="#b0b0b0" stroke-width="1.6"/><circle cx="7.1" cy="5.8" r="1.7" fill="#b0b0b0"/><path d="M3.4 16.6 L7.5 11.8 L9.9 14.2 L14.5 8.3 L20.5 16.6 Z" fill="#b0b0b0"/></svg><div class="cell" style="left:738.5px;top:448px;height:39px;line-height:39px;color:#444;-webkit-text-stroke:0.2px #444;letter-spacing:0.4px">慢丝–眼膜下(沙迪克)</div>
<div class="cell" style="left:876px;top:448px;height:39px;line-height:39px;font-weight:bold;color:#333;letter-spacing:0.2px">XJJH202401010001</div>
<div class="tag" style="left:1053px;top:459px;background:#f0f1f3;color:#a8abb2">未启用</div>
<div class="abs" style="left:1133px;top:448px;height:39px;line-height:39px;white-space:nowrap;font-weight:bold;padding-top:1px"><span style="color:#1e80e8">详情</span><span style="color:#1e80e8;margin-left:11px">编辑</span><span style="color:#f0662e;margin-left:11px">删除</span></div>
<div class="abs" style="left:457px;top:525px;width:785px;height:1px;background:#e3e4e7"></div>
<div class="abs" style="left:471px;top:501px;width:12px;height:12px;background:#fff;border:1px solid #dcdfe6;border-radius:1px"></div>
<div class="cell" style="left:413px;top:487px;height:39px;line-height:39px;color:#333;-webkit-text-stroke:0.45px #333">7</div>
<div class="cell" style="left:491px;top:487px;height:39px;line-height:39px;font-weight:bold;color:#1e80e8;letter-spacing:0.2px">501400011-26-01</div>
<svg class="abs" style="left:666px;top:496px" width="24" height="20.5" viewBox="0 0 24 20.5"><rect x="0.8" y="0.8" width="22.4" height="18.9" rx="0.6" fill="#fff" stroke="#b0b0b0" stroke-width="1.6"/><circle cx="7.1" cy="5.8" r="1.7" fill="#b0b0b0"/><path d="M3.4 16.6 L7.5 11.8 L9.9 14.2 L14.5 8.3 L20.5 16.6 Z" fill="#b0b0b0"/></svg><svg class="abs" style="left:701px;top:496px" width="24" height="20.5" viewBox="0 0 24 20.5"><rect x="0.8" y="0.8" width="22.4" height="18.9" rx="0.6" fill="#fff" stroke="#b0b0b0" stroke-width="1.6"/><circle cx="7.1" cy="5.8" r="1.7" fill="#b0b0b0"/><path d="M3.4 16.6 L7.5 11.8 L9.9 14.2 L14.5 8.3 L20.5 16.6 Z" fill="#b0b0b0"/></svg><svg class="abs" style="left:736px;top:496px" width="24" height="20.5" viewBox="0 0 24 20.5"><rect x="0.8" y="0.8" width="22.4" height="18.9" rx="0.6" fill="#fff" stroke="#b0b0b0" stroke-width="1.6"/><circle cx="7.1" cy="5.8" r="1.7" fill="#b0b0b0"/><path d="M3.4 16.6 L7.5 11.8 L9.9 14.2 L14.5 8.3 L20.5 16.6 Z" fill="#b0b0b0"/></svg><div class="cell" style="left:738.5px;top:487px;height:39px;line-height:39px;color:#444;-webkit-text-stroke:0.2px #444;letter-spacing:0.4px">慢丝–眼膜下(沙迪克)</div>
<div class="cell" style="left:876px;top:487px;height:39px;line-height:39px;font-weight:bold;color:#333;letter-spacing:0.2px">XJJH202401010001</div>
<div class="tag" style="left:1053px;top:498px;background:#f0f1f3;color:#a8abb2">未启用</div>
<div class="abs" style="left:1133px;top:487px;height:39px;line-height:39px;white-space:nowrap;font-weight:bold;padding-top:1px"><span style="color:#1e80e8">详情</span><span style="color:#1e80e8;margin-left:11px">编辑</span><span style="color:#f0662e;margin-left:11px">删除</span></div>
<div class="abs" style="left:457px;top:564px;width:785px;height:1px;background:#e3e4e7"></div>
<div class="abs" style="left:471px;top:540px;width:12px;height:12px;background:#fff;border:1px solid #dcdfe6;border-radius:1px"></div>
<div class="cell" style="left:413px;top:526px;height:39px;line-height:39px;color:#333;-webkit-text-stroke:0.45px #333">8</div>
<div class="cell" style="left:491px;top:526px;height:39px;line-height:39px;font-weight:bold;color:#1e80e8;letter-spacing:0.2px">501400011-26-01</div>
<svg class="abs" style="left:666px;top:535px" width="24" height="20.5" viewBox="0 0 24 20.5"><rect x="0.8" y="0.8" width="22.4" height="18.9" rx="0.6" fill="#fff" stroke="#b0b0b0" stroke-width="1.6"/><circle cx="7.1" cy="5.8" r="1.7" fill="#b0b0b0"/><path d="M3.4 16.6 L7.5 11.8 L9.9 14.2 L14.5 8.3 L20.5 16.6 Z" fill="#b0b0b0"/></svg><svg class="abs" style="left:701px;top:535px" width="24" height="20.5" viewBox="0 0 24 20.5"><rect x="0.8" y="0.8" width="22.4" height="18.9" rx="0.6" fill="#fff" stroke="#b0b0b0" stroke-width="1.6"/><circle cx="7.1" cy="5.8" r="1.7" fill="#b0b0b0"/><path d="M3.4 16.6 L7.5 11.8 L9.9 14.2 L14.5 8.3 L20.5 16.6 Z" fill="#b0b0b0"/></svg><svg class="abs" style="left:736px;top:535px" width="24" height="20.5" viewBox="0 0 24 20.5"><rect x="0.8" y="0.8" width="22.4" height="18.9" rx="0.6" fill="#fff" stroke="#b0b0b0" stroke-width="1.6"/><circle cx="7.1" cy="5.8" r="1.7" fill="#b0b0b0"/><path d="M3.4 16.6 L7.5 11.8 L9.9 14.2 L14.5 8.3 L20.5 16.6 Z" fill="#b0b0b0"/></svg><div class="cell" style="left:738.5px;top:526px;height:39px;line-height:39px;color:#444;-webkit-text-stroke:0.2px #444;letter-spacing:0.4px">慢丝–眼膜下(沙迪克)</div>
<div class="cell" style="left:876px;top:526px;height:39px;line-height:39px;font-weight:bold;color:#333;letter-spacing:0.2px">XJJH202401010001</div>
<div class="tag" style="left:1053px;top:537px;background:#f0f1f3;color:#a8abb2">未启用</div>
<div class="abs" style="left:1133px;top:526px;height:39px;line-height:39px;white-space:nowrap;font-weight:bold;padding-top:1px"><span style="color:#1e80e8">详情</span><span style="color:#1e80e8;margin-left:11px">编辑</span><span style="color:#f0662e;margin-left:11px">删除</span></div>
<div class="abs" style="left:457px;top:602px;width:785px;height:1px;background:#e3e4e7"></div>
<div class="abs" style="left:471px;top:579px;width:12px;height:12px;background:#fff;border:1px solid #dcdfe6;border-radius:1px"></div>
<div class="cell" style="left:413px;top:565px;height:39px;line-height:39px;color:#333;-webkit-text-stroke:0.45px #333">9</div>
<div class="cell" style="left:491px;top:565px;height:39px;line-height:39px;font-weight:bold;color:#1e80e8;letter-spacing:0.2px">501400011-26-01</div>
<svg class="abs" style="left:666px;top:574px" width="24" height="20.5" viewBox="0 0 24 20.5"><rect x="0.8" y="0.8" width="22.4" height="18.9" rx="0.6" fill="#fff" stroke="#b0b0b0" stroke-width="1.6"/><circle cx="7.1" cy="5.8" r="1.7" fill="#b0b0b0"/><path d="M3.4 16.6 L7.5 11.8 L9.9 14.2 L14.5 8.3 L20.5 16.6 Z" fill="#b0b0b0"/></svg><svg class="abs" style="left:701px;top:574px" width="24" height="20.5" viewBox="0 0 24 20.5"><rect x="0.8" y="0.8" width="22.4" height="18.9" rx="0.6" fill="#fff" stroke="#b0b0b0" stroke-width="1.6"/><circle cx="7.1" cy="5.8" r="1.7" fill="#b0b0b0"/><path d="M3.4 16.6 L7.5 11.8 L9.9 14.2 L14.5 8.3 L20.5 16.6 Z" fill="#b0b0b0"/></svg><svg class="abs" style="left:736px;top:574px" width="24" height="20.5" viewBox="0 0 24 20.5"><rect x="0.8" y="0.8" width="22.4" height="18.9" rx="0.6" fill="#fff" stroke="#b0b0b0" stroke-width="1.6"/><circle cx="7.1" cy="5.8" r="1.7" fill="#b0b0b0"/><path d="M3.4 16.6 L7.5 11.8 L9.9 14.2 L14.5 8.3 L20.5 16.6 Z" fill="#b0b0b0"/></svg><div class="cell" style="left:738.5px;top:565px;height:39px;line-height:39px;color:#444;-webkit-text-stroke:0.2px #444;letter-spacing:0.4px">慢丝–眼膜下(沙迪克)</div>
<div class="cell" style="left:876px;top:565px;height:39px;line-height:39px;font-weight:bold;color:#333;letter-spacing:0.2px">XJJH202401010001</div>
<div class="tag" style="left:1053px;top:576px;background:#f0f1f3;color:#a8abb2">未启用</div>
<div class="abs" style="left:1133px;top:565px;height:39px;line-height:39px;white-space:nowrap;font-weight:bold;padding-top:1px"><span style="color:#1e80e8">详情</span><span style="color:#1e80e8;margin-left:11px">编辑</span><span style="color:#f0662e;margin-left:11px">删除</span></div>
<div class="abs" style="left:457px;top:641px;width:785px;height:1px;background:#e3e4e7"></div>
<div class="abs" style="left:471px;top:617px;width:12px;height:12px;background:#fff;border:1px solid #dcdfe6;border-radius:1px"></div>
<div class="cell" style="left:413px;top:603px;height:39px;line-height:39px;color:#333;-webkit-text-stroke:0.45px #333">10</div>
<div class="cell" style="left:491px;top:603px;height:39px;line-height:39px;font-weight:bold;color:#1e80e8;letter-spacing:0.2px">501400011-26-01</div>
<svg class="abs" style="left:666px;top:612px" width="24" height="20.5" viewBox="0 0 24 20.5"><rect x="0.8" y="0.8" width="22.4" height="18.9" rx="0.6" fill="#fff" stroke="#b0b0b0" stroke-width="1.6"/><circle cx="7.1" cy="5.8" r="1.7" fill="#b0b0b0"/><path d="M3.4 16.6 L7.5 11.8 L9.9 14.2 L14.5 8.3 L20.5 16.6 Z" fill="#b0b0b0"/></svg><svg class="abs" style="left:701px;top:612px" width="24" height="20.5" viewBox="0 0 24 20.5"><rect x="0.8" y="0.8" width="22.4" height="18.9" rx="0.6" fill="#fff" stroke="#b0b0b0" stroke-width="1.6"/><circle cx="7.1" cy="5.8" r="1.7" fill="#b0b0b0"/><path d="M3.4 16.6 L7.5 11.8 L9.9 14.2 L14.5 8.3 L20.5 16.6 Z" fill="#b0b0b0"/></svg><svg class="abs" style="left:736px;top:612px" width="24" height="20.5" viewBox="0 0 24 20.5"><rect x="0.8" y="0.8" width="22.4" height="18.9" rx="0.6" fill="#fff" stroke="#b0b0b0" stroke-width="1.6"/><circle cx="7.1" cy="5.8" r="1.7" fill="#b0b0b0"/><path d="M3.4 16.6 L7.5 11.8 L9.9 14.2 L14.5 8.3 L20.5 16.6 Z" fill="#b0b0b0"/></svg><div class="cell" style="left:738.5px;top:603px;height:39px;line-height:39px;color:#444;-webkit-text-stroke:0.2px #444;letter-spacing:0.4px">慢丝–眼膜下(沙迪克)</div>
<div class="cell" style="left:876px;top:603px;height:39px;line-height:39px;font-weight:bold;color:#333;letter-spacing:0.2px">XJJH202401010001</div>
<div class="tag" style="left:1053px;top:614px;background:#f0f1f3;color:#a8abb2">未启用</div>
<div class="abs" style="left:1133px;top:603px;height:39px;line-height:39px;white-space:nowrap;font-weight:bold;padding-top:1px"><span style="color:#1e80e8">详情</span><span style="color:#1e80e8;margin-left:11px">编辑</span><span style="color:#f0662e;margin-left:11px">删除</span></div>
<div class="abs" style="left:457px;top:680px;width:785px;height:1px;background:#e3e4e7"></div>
<div class="abs" style="left:471px;top:656px;width:12px;height:12px;background:#fff;border:1px solid #dcdfe6;border-radius:1px"></div>
<div class="cell" style="left:413px;top:642px;height:39px;line-height:39px;color:#333;-webkit-text-stroke:0.45px #333">11</div>
<div class="cell" style="left:491px;top:642px;height:39px;line-height:39px;font-weight:bold;color:#1e80e8;letter-spacing:0.2px">501400011-26-01</div>
<svg class="abs" style="left:666px;top:651px" width="24" height="20.5" viewBox="0 0 24 20.5"><rect x="0.8" y="0.8" width="22.4" height="18.9" rx="0.6" fill="#fff" stroke="#b0b0b0" stroke-width="1.6"/><circle cx="7.1" cy="5.8" r="1.7" fill="#b0b0b0"/><path d="M3.4 16.6 L7.5 11.8 L9.9 14.2 L14.5 8.3 L20.5 16.6 Z" fill="#b0b0b0"/></svg><svg class="abs" style="left:701px;top:651px" width="24" height="20.5" viewBox="0 0 24 20.5"><rect x="0.8" y="0.8" width="22.4" height="18.9" rx="0.6" fill="#fff" stroke="#b0b0b0" stroke-width="1.6"/><circle cx="7.1" cy="5.8" r="1.7" fill="#b0b0b0"/><path d="M3.4 16.6 L7.5 11.8 L9.9 14.2 L14.5 8.3 L20.5 16.6 Z" fill="#b0b0b0"/></svg><svg class="abs" style="left:736px;top:651px" width="24" height="20.5" viewBox="0 0 24 20.5"><rect x="0.8" y="0.8" width="22.4" height="18.9" rx="0.6" fill="#fff" stroke="#b0b0b0" stroke-width="1.6"/><circle cx="7.1" cy="5.8" r="1.7" fill="#b0b0b0"/><path d="M3.4 16.6 L7.5 11.8 L9.9 14.2 L14.5 8.3 L20.5 16.6 Z" fill="#b0b0b0"/></svg><div class="cell" style="left:738.5px;top:642px;height:39px;line-height:39px;color:#444;-webkit-text-stroke:0.2px #444;letter-spacing:0.4px">慢丝–眼膜下(沙迪克)</div>
<div class="cell" style="left:876px;top:642px;height:39px;line-height:39px;font-weight:bold;color:#333;letter-spacing:0.2px">XJJH202401010001</div>
<div class="tag" style="left:1053px;top:653px;background:#f0f1f3;color:#a8abb2">未启用</div>
<div class="abs" style="left:1133px;top:642px;height:39px;line-height:39px;white-space:nowrap;font-weight:bold;padding-top:1px"><span style="color:#1e80e8">详情</span><span style="color:#1e80e8;margin-left:11px">编辑</span><span style="color:#f0662e;margin-left:11px">删除</span></div>
<div class="abs" style="left:457px;top:719px;width:785px;height:1px;background:#e3e4e7"></div>
<div class="abs" style="left:471px;top:695px;width:12px;height:12px;background:#fff;border:1px solid #dcdfe6;border-radius:1px"></div>
<div class="cell" style="left:413px;top:681px;height:39px;line-height:39px;color:#333;-webkit-text-stroke:0.45px #333">12</div>
<div class="cell" style="left:491px;top:681px;height:39px;line-height:39px;font-weight:bold;color:#1e80e8;letter-spacing:0.2px">501400011-26-01</div>
<svg class="abs" style="left:666px;top:690px" width="24" height="20.5" viewBox="0 0 24 20.5"><rect x="0.8" y="0.8" width="22.4" height="18.9" rx="0.6" fill="#fff" stroke="#b0b0b0" stroke-width="1.6"/><circle cx="7.1" cy="5.8" r="1.7" fill="#b0b0b0"/><path d="M3.4 16.6 L7.5 11.8 L9.9 14.2 L14.5 8.3 L20.5 16.6 Z" fill="#b0b0b0"/></svg><svg class="abs" style="left:701px;top:690px" width="24" height="20.5" viewBox="0 0 24 20.5"><rect x="0.8" y="0.8" width="22.4" height="18.9" rx="0.6" fill="#fff" stroke="#b0b0b0" stroke-width="1.6"/><circle cx="7.1" cy="5.8" r="1.7" fill="#b0b0b0"/><path d="M3.4 16.6 L7.5 11.8 L9.9 14.2 L14.5 8.3 L20.5 16.6 Z" fill="#b0b0b0"/></svg><svg class="abs" style="left:736px;top:690px" width="24" height="20.5" viewBox="0 0 24 20.5"><rect x="0.8" y="0.8" width="22.4" height="18.9" rx="0.6" fill="#fff" stroke="#b0b0b0" stroke-width="1.6"/><circle cx="7.1" cy="5.8" r="1.7" fill="#b0b0b0"/><path d="M3.4 16.6 L7.5 11.8 L9.9 14.2 L14.5 8.3 L20.5 16.6 Z" fill="#b0b0b0"/></svg><div class="cell" style="left:738.5px;top:681px;height:39px;line-height:39px;color:#444;-webkit-text-stroke:0.2px #444;letter-spacing:0.4px">慢丝–眼膜下(沙迪克)</div>
<div class="cell" style="left:876px;top:681px;height:39px;line-height:39px;font-weight:bold;color:#333;letter-spacing:0.2px">XJJH202401010001</div>
<div class="tag" style="left:1053px;top:692px;background:#f0f1f3;color:#a8abb2">未启用</div>
<div class="abs" style="left:1133px;top:681px;height:39px;line-height:39px;white-space:nowrap;font-weight:bold;padding-top:1px"><span style="color:#1e80e8">详情</span><span style="color:#1e80e8;margin-left:11px">编辑</span><span style="color:#f0662e;margin-left:11px">删除</span></div>
<div class="abs" style="left:938px;top:739px;font-size:12px;line-height:17px;color:#555;white-space:nowrap;-webkit-text-stroke:0.2px #555">合计：2</div>
<div class="abs" style="left:989px;top:734px;width:71px;height:25px;border:1px solid #dcdfe6;border-radius:2px;background:#fff;font-size:12px;line-height:23px;color:#555;padding-left:7px;padding-top:1px;-webkit-text-stroke:0.2px #555">10/页<svg class="abs" style="left:54px;top:9px" width="8" height="5" viewBox="0 0 8 5"><path d="M0 0 H8 L4 5 Z" fill="#c0c4cc"/></svg></div>
<div class="abs" style="left:1067px;top:734px;width:111px;height:25px;border:1px solid #dcdfe6;border-radius:2px;background:#fff;font-size:12px;line-height:23px;color:#555;padding-left:6px;padding-top:1px;white-space:nowrap;-webkit-text-stroke:0.2px #555">2/2&nbsp;&nbsp; 跳至：<span class="abs" style="left:91px;top:1px">页</span></div>
<div class="abs" style="left:1185px;top:734px;width:25px;height:25px;border-radius:2px;background:#eef0f4"><svg class="abs" style="left:9px;top:7px" width="7" height="11" viewBox="0 0 7 11"><path d="M6 1 L1.5 5.5 L6 10" fill="none" stroke="#c0c4cc" stroke-width="1.2"/></svg></div>
<div class="abs" style="left:1217px;top:734px;width:25px;height:25px;border-radius:2px;background:#0a7cf5"><svg class="abs" style="left:9px;top:7px" width="7" height="11" viewBox="0 0 7 11"><path d="M1 1 L5.5 5.5 L1 10" fill="none" stroke="#fff" stroke-width="1.5"/></svg></div>
</body></html>
